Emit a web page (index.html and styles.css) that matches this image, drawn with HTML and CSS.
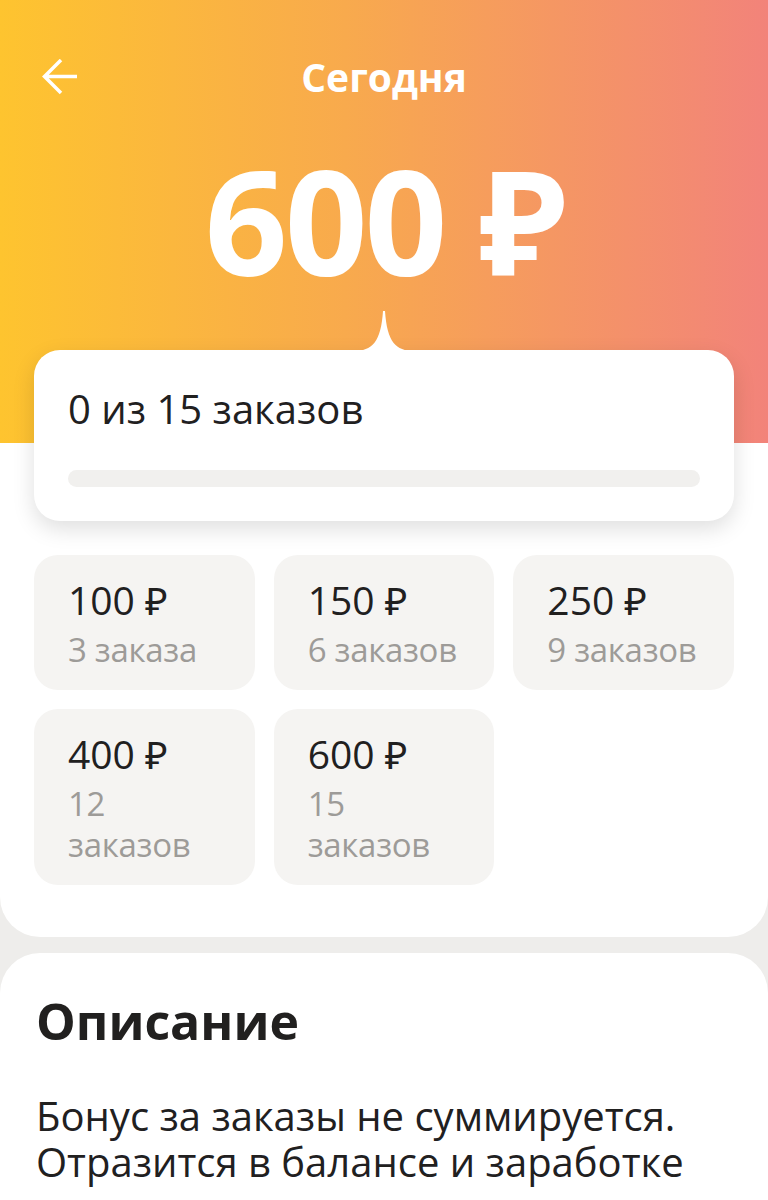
FILE: index.html
```html
<!DOCTYPE html>
<html lang="ru">
<head>
    <meta charset="UTF-8">
    <meta name="viewport" content="width=device-width, initial-scale=1.0">
    <title>Сегодня</title>
    <link rel="stylesheet" href="styles.css">
</head>
<body>
    <div class="header">
        <div class="nav">
            <svg class="back" width="36" height="36" viewBox="0 0 36 36">
                <path d="M35 17.5 H2.5 M19 1 L2.5 17.5 L19 34" fill="none" stroke="#fff" stroke-width="3.5"/>
            </svg>
            <div class="nav-title">Сегодня</div>
        </div>
        <div class="amount">600 ₽</div>
    </div>

    <div class="main">
        <div class="progress-card">
            <svg class="notch" width="60" height="40" viewBox="0 0 60 40">
                <path d="M0 40 C18 40 27 31 29 0 L31 0 C33 31 42 40 60 40 Z" fill="#fff"/>
            </svg>
            <div class="progress-text">0 из 15 заказов</div>
            <div class="progress-bar"></div>
        </div>

        <div class="tiles">
            <div class="tile">
                <div class="tile-sum">100 ₽</div>
                <div class="tile-count">3 заказа</div>
            </div>
            <div class="tile">
                <div class="tile-sum">150 ₽</div>
                <div class="tile-count">6 заказов</div>
            </div>
            <div class="tile">
                <div class="tile-sum">250 ₽</div>
                <div class="tile-count">9 заказов</div>
            </div>
            <div class="tile">
                <div class="tile-sum">400 ₽</div>
                <div class="tile-count">12 заказов</div>
            </div>
            <div class="tile">
                <div class="tile-sum">600 ₽</div>
                <div class="tile-count">15 заказов</div>
            </div>
        </div>
    </div>

    <div class="description">
        <h2>Описание</h2>
        <p>Бонус за заказы не суммируется. Отразится в балансе и заработке</p>
    </div>
</body>
</html>
```

FILE: styles.css
```css
body {
    margin: 0;
    background-color: #eeedeb;
    font-family: "Open Sans", "Noto Sans", sans-serif;
    color: #21201f;
}

.header {
    height: 443px;
    box-sizing: border-box;
    padding-top: 59px;
    background: linear-gradient(90deg, #fec42f 0%, #f8aa4d 45%, #f2837a 100%);
    color: #fff;
}

.nav {
    position: relative;
    height: 36px;
    display: flex;
    justify-content: center;
    align-items: center;
}

.back {
    position: absolute;
    left: 42px;
    top: 0;
}

.nav-title {
    font-size: 39px;
    font-weight: 700;
    line-height: 36px;
}

.amount {
    margin-top: 52px;
    text-align: center;
    font-size: 145px;
    font-weight: 700;
    line-height: 145px;
    letter-spacing: -3px;
}

.main {
    display: flow-root;
    background-color: #fff;
    border-radius: 0 0 40px 40px;
    padding: 0 34px 52px;
}

.progress-card {
    position: relative;
    margin-top: -93px;
    height: 171px;
    box-sizing: border-box;
    padding: 37px 34px 0;
    background-color: #fff;
    border-radius: 26px;
    box-shadow: 0 8px 22px rgba(0, 0, 0, 0.13);
}

.notch {
    position: absolute;
    top: -39px;
    left: 50%;
    margin-left: -30px;
}

.progress-text {
    font-size: 40px;
    line-height: 44px;
}

.progress-bar {
    margin-top: 39px;
    height: 17px;
    border-radius: 9px;
    background-color: #f1f0ee;
}

.tiles {
    margin-top: 34px;
    display: grid;
    grid-template-columns: repeat(3, 1fr);
    gap: 19px;
}

.tile {
    background-color: #f5f4f2;
    border-radius: 24px;
    padding: 16px 30px 20px 34px;
}

.tile-sum {
    font-size: 39px;
    line-height: 58px;
}

.tile-count {
    font-size: 33px;
    line-height: 41px;
    color: #9d9b98;
    letter-spacing: -0.3px;
}

.description {
    margin-top: 16px;
    background-color: #fff;
    border-radius: 40px 40px 0 0;
    padding: 40px 36px 60px;
}

.description h2 {
    margin: 0;
    font-size: 50px;
    line-height: 56px;
    font-weight: 700;
}

.description p {
    margin: 44px 0 0;
    font-size: 40px;
    line-height: 46px;
}
```
